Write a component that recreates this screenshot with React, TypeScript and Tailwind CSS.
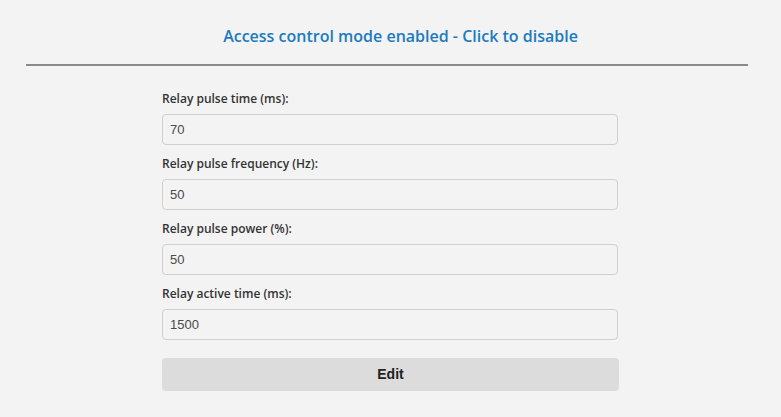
import React from "react";

const fields = [
  { label: "Relay pulse time (ms):", value: "70" },
  { label: "Relay pulse frequency (Hz):", value: "50" },
  { label: "Relay pulse power (%):", value: "50" },
  { label: "Relay active time (ms):", value: "1500" },
];

export default function App() {
  return (
    <div className="w-[781px] h-[417px] bg-[#f3f3f3] overflow-hidden">
      <div className="pt-[25px] pl-[20px] flex justify-center">
        <span
          className="text-[16px] font-semibold text-[#1b7bc0] leading-[22px] cursor-pointer"
          style={{ fontFamily: '"Open Sans", sans-serif' }}
        >
          Access control mode enabled - Click to disable
        </span>
      </div>
      <div className="mx-[26px] mt-[17px] h-[2px] bg-[#8a8a8a] w-[722px]" />
      <div className="ml-[162px] w-[456px] pt-[22px] flex flex-col">
        {fields.map((f) => (
          <div key={f.label} className="flex flex-col mb-[4px]">
            <label
              className="text-[12px] font-semibold text-[#333] leading-[17px] h-[26px] pt-[2px]"
              style={{ fontFamily: '"Open Sans", sans-serif' }}
            >
              {f.label}
            </label>
            <div
              className="h-[31px] border border-[#cfcfcf] rounded-[4px] bg-[#f3f3f3] flex items-center pl-[7px] text-[13px] text-[#4a4a4a]"
              style={{ fontFamily: '"Liberation Sans", Arial, sans-serif' }}
            >
              {f.value}
            </div>
            <div className="h-[4px]" />
          </div>
        ))}
        <button
          className="mt-[10px] h-[33px] w-[457px] rounded-[4px] bg-[#dcdcdc] text-[14px] font-bold text-[#222]"
          style={{ fontFamily: '"Liberation Sans", Arial, sans-serif' }}
        >
          Edit
        </button>
      </div>
    </div>
  );
}
